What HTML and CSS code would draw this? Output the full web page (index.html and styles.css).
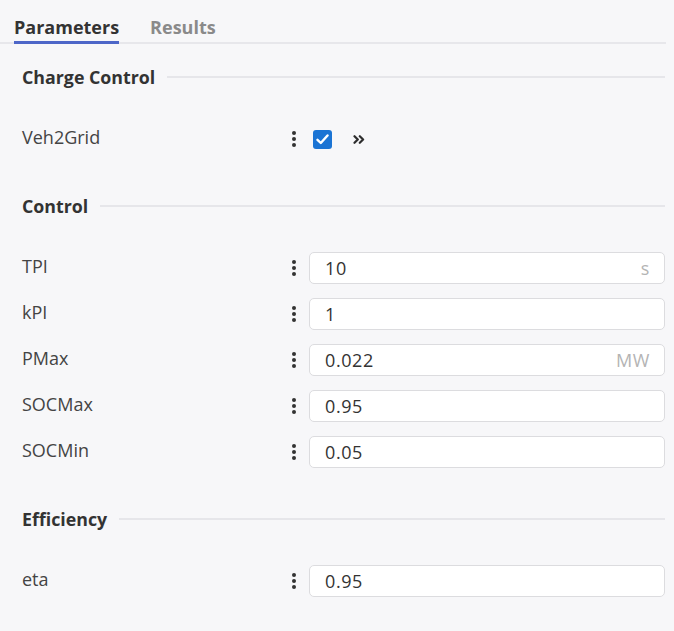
FILE: index.html
```html
<!DOCTYPE html>
<html lang="en">
<head>
  <meta charset="UTF-8" />
  <meta name="viewport" content="width=device-width, initial-scale=1.0"/>
  <title>Parameters</title>
  <link rel="stylesheet" href="styles.css">
</head>
<body>

  <nav class="tabs">
    <a class="tab active" href="#">Parameters</a>
    <a class="tab" href="#">Results</a>
  </nav>

  <main>
    <section class="group">
      <h3 class="group-title">Charge Control</h3>
      <div class="rows">
        <div class="row">
          <label>Veh2Grid</label>
          <span class="kebab"><svg width="4" height="16" viewBox="0 0 4 16"><circle cx="2" cy="2" r="2"/><circle cx="2" cy="8" r="2"/><circle cx="2" cy="14" r="2"/></svg></span>
          <div class="check-wrap">
            <span class="checkbox"><svg width="13" height="11" viewBox="0 0 13 11"><path d="M1.5 5.8l3.3 3.2 6.7-7.5" fill="none" stroke="#fff" stroke-width="2.4" stroke-linecap="round" stroke-linejoin="round"/></svg></span>
            <span class="expand"><svg width="12" height="9" viewBox="0 0 12 9"><path d="M1.5 1.2l3.3 3.3-3.3 3.3M6.8 1.2l3.3 3.3-3.3 3.3" fill="none" stroke="#2e2e2e" stroke-width="2.2" stroke-linecap="round" stroke-linejoin="round"/></svg></span>
          </div>
        </div>
      </div>
    </section>

    <section class="group">
      <h3 class="group-title">Control</h3>
      <div class="rows">
        <div class="row">
          <label>TPI</label>
          <span class="kebab"><svg width="4" height="16" viewBox="0 0 4 16"><circle cx="2" cy="2" r="2"/><circle cx="2" cy="8" r="2"/><circle cx="2" cy="14" r="2"/></svg></span>
          <div class="field"><input type="text" value="10"><span class="unit">s</span></div>
        </div>
        <div class="row">
          <label>kPI</label>
          <span class="kebab"><svg width="4" height="16" viewBox="0 0 4 16"><circle cx="2" cy="2" r="2"/><circle cx="2" cy="8" r="2"/><circle cx="2" cy="14" r="2"/></svg></span>
          <div class="field"><input type="text" value="1"></div>
        </div>
        <div class="row">
          <label>PMax</label>
          <span class="kebab"><svg width="4" height="16" viewBox="0 0 4 16"><circle cx="2" cy="2" r="2"/><circle cx="2" cy="8" r="2"/><circle cx="2" cy="14" r="2"/></svg></span>
          <div class="field"><input type="text" value="0.022"><span class="unit">MW</span></div>
        </div>
        <div class="row">
          <label>SOCMax</label>
          <span class="kebab"><svg width="4" height="16" viewBox="0 0 4 16"><circle cx="2" cy="2" r="2"/><circle cx="2" cy="8" r="2"/><circle cx="2" cy="14" r="2"/></svg></span>
          <div class="field"><input type="text" value="0.95"></div>
        </div>
        <div class="row">
          <label>SOCMin</label>
          <span class="kebab"><svg width="4" height="16" viewBox="0 0 4 16"><circle cx="2" cy="2" r="2"/><circle cx="2" cy="8" r="2"/><circle cx="2" cy="14" r="2"/></svg></span>
          <div class="field"><input type="text" value="0.05"></div>
        </div>
      </div>
    </section>

    <section class="group">
      <h3 class="group-title">Efficiency</h3>
      <div class="rows">
        <div class="row">
          <label>eta</label>
          <span class="kebab"><svg width="4" height="16" viewBox="0 0 4 16"><circle cx="2" cy="2" r="2"/><circle cx="2" cy="8" r="2"/><circle cx="2" cy="14" r="2"/></svg></span>
          <div class="field"><input type="text" value="0.95"></div>
        </div>
      </div>
    </section>
  </main>

</body>
</html>
```

FILE: styles.css
```css
body {
  font-family: 'Open Sans', 'Noto Sans', sans-serif;
  margin: 0;
  background-color: #f7f7f9;
  color: #333;
}

.tabs {
  display: flex;
  align-items: flex-start;
  gap: 31px;
  padding-left: 14px;
  margin-right: 8px;
  border-bottom: 2px solid #e7e7eb;
  height: 42px;
}

.tab {
  font-size: 18px;
  font-weight: 700;
  line-height: 24px;
  padding-top: 15px;
  height: 26px;
  color: #8a8a8a;
  text-decoration: none;
  border-bottom: 3px solid transparent;
}

.tab.active {
  color: #333;
  border-bottom-color: #4d66c8;
}

main {
  padding: 21px 9px 0 22px;
}

.group + .group {
  margin-top: 39px;
}

.group-title {
  display: flex;
  align-items: center;
  gap: 12px;
  margin: 0 0 34px;
  font-size: 17.8px;
  font-weight: 700;
  line-height: 24px;
  color: #333;
}

.group-title::after {
  content: "";
  flex: 1;
  height: 2px;
  background: #e6e6ea;
}

.rows {
  display: flex;
  flex-direction: column;
  gap: 14px;
}

.row {
  display: grid;
  grid-template-columns: 266px 21px 1fr;
  align-items: center;
  height: 32px;
}

.row label {
  font-size: 18px;
  color: #444;
  margin-top: -5px;
}

.kebab {
  display: flex;
  padding-left: 4px;
  fill: #333;
}

.check-wrap {
  display: flex;
  align-items: center;
  gap: 21px;
  padding-left: 4px;
}

.checkbox {
  display: flex;
  align-items: center;
  justify-content: center;
  width: 19px;
  height: 19px;
  border-radius: 3px;
  background: #1b74d4;
}

.expand {
  display: flex;
}

.field {
  display: flex;
  align-items: center;
  height: 32px;
  box-sizing: border-box;
  background: #fff;
  border: 1px solid #dcdcdf;
  border-radius: 5px;
  padding: 0 14px 0 15px;
}

.field input {
  flex: 1;
  min-width: 0;
  border: none;
  outline: none;
  background: transparent;
  padding: 0;
  font-family: inherit;
  font-size: 18px;
  letter-spacing: 0.6px;
  color: #333;
}

.unit {
  font-size: 18px;
  letter-spacing: 0.6px;
  color: #b4b4b4;
}
```
